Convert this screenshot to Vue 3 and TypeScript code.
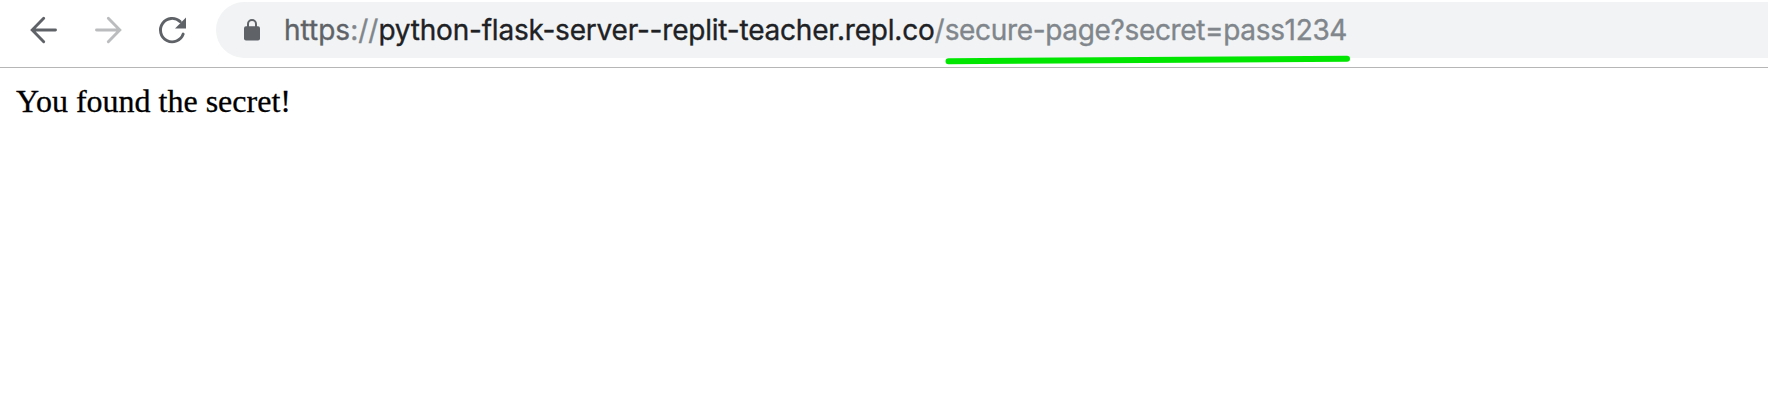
<script setup lang="ts">
interface UrlPart {
  text: string
  kind: string
}

const urlParts: UrlPart[] = [
  { text: 'https', kind: 'scheme' },
  { text: '://', kind: 'separator' },
  { text: 'python-flask-server--replit-teacher.repl.co', kind: 'host' },
  { text: '/', kind: 'slash' },
  { text: 'secure-page?secret=pass1234', kind: 'path' },
]
</script>

<template>
  <div class="browser">
    <header class="toolbar">
      <nav class="controls">
        <svg class="icon" viewBox="0 0 32 32" aria-label="Back">
          <path d="M27.5 16H5M15.7 4.3L4.2 16l11.5 11.7" />
        </svg>
        <svg class="icon disabled" viewBox="0 0 32 32" aria-label="Forward">
          <path d="M4.5 16H27M16.3 4.3L27.8 16 16.3 27.7" />
        </svg>
        <svg class="icon" viewBox="0 0 32 32" aria-label="Reload">
          <path d="M27.2 20A11.7 11.7 0 1 1 24.2 7.6" />
          <path class="solid" d="M30 3.5v11H19z" />
        </svg>
      </nav>
      <div class="address">
        <svg class="lock" viewBox="0 0 16 22" aria-label="Secure">
          <rect x="0" y="7.3" width="16" height="14.2" rx="2" />
          <path d="M4 8V5a4 4 0 0 1 8 0v3" />
        </svg>
        <div class="url"><span v-for="part in urlParts" :key="part.kind" :class="part.kind">{{ part.text }}</span></div>
      </div>
      <svg class="underline" viewBox="0 0 410 12" aria-hidden="true">
        <path d="M6.5 8.2L405 5.8" />
      </svg>
    </header>
    <main class="page">You found the secret!</main>
  </div>
</template>

<style>
html,
body {
  background: #fff;
}
</style>

<style scoped>
.browser {
  height: 416px;
  overflow: hidden;
  background: #fff;
}
.toolbar {
  position: relative;
  box-sizing: border-box;
  height: 68px;
  padding-top: 2px;
  display: flex;
  border-bottom: 1px solid #b6b6b6;
}
.controls {
  width: 216px;
  height: 56px;
  box-sizing: border-box;
  padding-left: 28px;
  display: flex;
  align-items: center;
  gap: 32px;
  flex: none;
}
.icon {
  width: 32px;
  height: 32px;
  position: relative;
  top: -0.5px;
  fill: none;
  stroke: #5f6368;
  stroke-width: 2.9;
  stroke-linecap: round;
}
.disabled {
  stroke: #babcbe;
}
.solid {
  fill: #5f6368;
  stroke: none;
}
.address {
  flex: 1;
  height: 56px;
  display: flex;
  align-items: center;
  background: #f1f3f4;
  border-radius: 28px 0 0 28px;
}
.lock {
  width: 16px;
  height: 22px;
  margin-left: 28px;
  fill: #5f6368;
}
.lock path {
  fill: none;
  stroke: #5f6368;
  stroke-width: 2;
}
.url {
  margin-left: 24px;
  font: 28px/56px Inter, sans-serif;
  white-space: nowrap;
  -webkit-text-stroke: 0.35px currentColor;
}
.scheme {
  color: #5f6368;
}
.separator,
.slash,
.path {
  color: #80868b;
}
.host {
  color: #202124;
  letter-spacing: -0.2px;
}
.path {
  letter-spacing: -0.34px;
}
.underline {
  position: absolute;
  left: 942px;
  top: 53px;
  width: 410px;
  height: 12px;
  fill: none;
  stroke: #00e600;
  stroke-width: 6;
  stroke-linecap: round;
}
.page {
  padding: 15px 16px;
  font: 32px/36px "Liberation Serif", serif;
  color: #000;
  -webkit-text-stroke: 0.3px currentColor;
}
</style>
